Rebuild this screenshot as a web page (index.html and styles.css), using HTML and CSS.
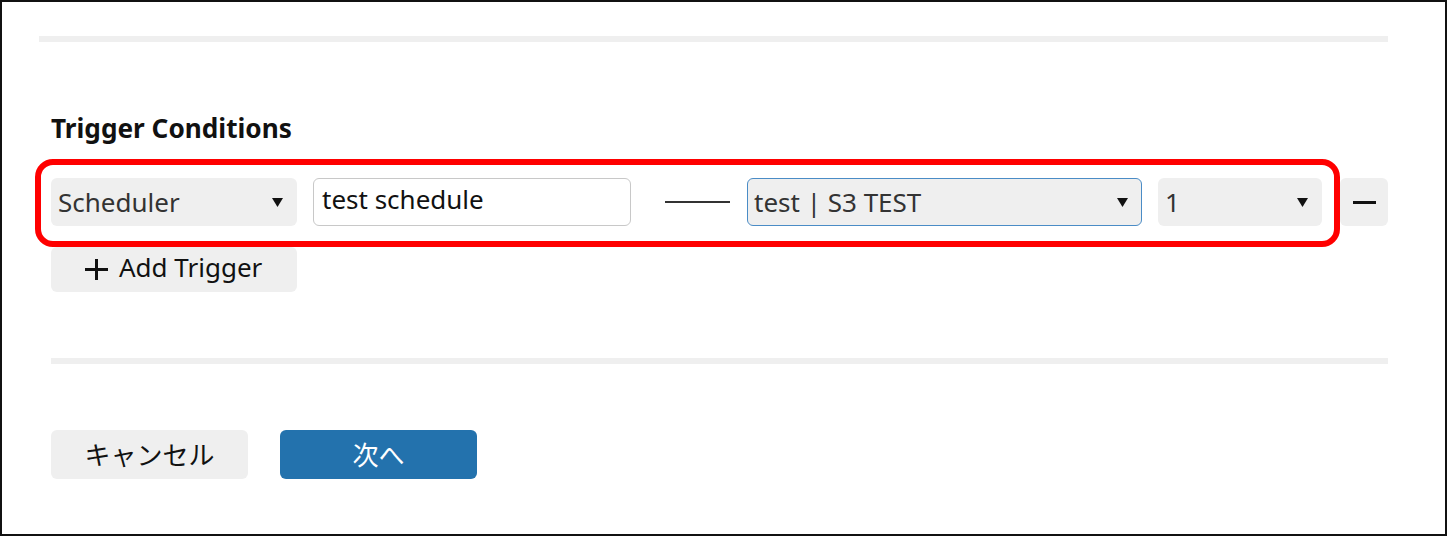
FILE: index.html
```html
<!DOCTYPE html>
<html lang="ja">
<head>
<meta charset="utf-8">
<title>Trigger Conditions</title>
<link rel="stylesheet" href="styles.css">
</head>
<body>
<div class="frame">
  <div class="top-rule"></div>
  <div class="content">
    <h2 class="heading">Trigger Conditions</h2>
    <div class="row">
      <div class="select select-type">
        <span class="select-text">Scheduler</span>
        <svg class="caret" width="11" height="9" viewBox="0 0 11 9"><path d="M0 0H11L5.5 9Z" fill="#111"/></svg>
      </div>
      <div class="input">test schedule</div>
      <div class="dash"></div>
      <div class="select select-target focused">
        <span class="select-text">test | S3 TEST</span>
        <svg class="caret" width="11" height="9" viewBox="0 0 11 9"><path d="M0 0H11L5.5 9Z" fill="#111"/></svg>
      </div>
      <div class="select select-count">
        <span class="select-text">1</span>
        <svg class="caret" width="11" height="9" viewBox="0 0 11 9"><path d="M0 0H11L5.5 9Z" fill="#111"/></svg>
      </div>
      <div class="btn-icon"><span class="minus"></span></div>
    </div>
    <div class="btn add-btn">
      <svg class="plus" width="23" height="21" viewBox="0 0 23 21"><path d="M0 10.5H23M11.5 0V21" stroke="#111" stroke-width="3"/></svg>
      <span>Add Trigger</span>
    </div>
    <div class="bottom-rule"></div>
    <div class="actions">
      <div class="btn cancel-btn">キャンセル</div>
      <div class="btn next-btn">次へ</div>
    </div>
  </div>
  <div class="highlight"></div>
</div>
</body>
</html>
```

FILE: styles.css
```css
html, body {
  margin: 0;
  padding: 0;
  background: #fff;
}
body {
  font-family: "Noto Sans", "Noto Sans CJK JP", sans-serif;
  color: #111;
}
.frame {
  position: relative;
  width: 1447px;
  height: 536px;
  box-sizing: border-box;
  border: 2px solid #111;
  overflow: hidden;
}
.top-rule {
  margin: 34px 0 0 37px;
  width: 1349px;
  height: 6px;
  background: #efefef;
}
.content {
  padding-left: 49px;
  width: 1337px;
}
.heading {
  margin: 70px 0 0;
  font-size: 26.2px;
  line-height: 32px;
  font-weight: 700;
  color: #111;
}
.row {
  display: flex;
  align-items: center;
  margin-top: 34px;
  height: 48px;
}
.select {
  box-sizing: border-box;
  height: 48px;
  background: #efefef;
  border-radius: 6px;
  display: flex;
  align-items: center;
  justify-content: space-between;
  padding: 0 14px 0 7px;
  font-size: 26px;
  color: #333;
}
.select-text {
  line-height: 48px;
  white-space: pre;
}
.caret {
  display: block;
  flex: none;
}
.select-type { width: 246px; }
.input {
  box-sizing: border-box;
  width: 318px;
  height: 48px;
  margin-left: 16px;
  border: 1px solid #c8c8c8;
  border-radius: 6px;
  background: #fff;
  padding: 0 8px;
  font-size: 26px;
  line-height: 40px;
  color: #111;
}
.dash {
  width: 65px;
  height: 2px;
  margin-left: 34px;
  background: #333;
}
.select-target {
  width: 395px;
  margin-left: 17px;
  padding-left: 7px;
}
.focused {
  border: 1px solid #4a8cc6;
  padding-left: 6px;
  padding-right: 13px;
}
.select-count {
  width: 164px;
  margin-left: 16px;
}
.btn-icon {
  width: 48px;
  height: 48px;
  margin-left: 18px;
  background: #efefef;
  border-radius: 6px;
  display: flex;
  align-items: center;
  justify-content: center;
}
.minus {
  display: block;
  width: 23px;
  height: 3px;
  background: #111;
}
.btn {
  box-sizing: border-box;
  border-radius: 6px;
  background: #efefef;
  font-size: 26px;
  display: flex;
  align-items: center;
  justify-content: center;
}
.add-btn {
  width: 246px;
  height: 45px;
  margin-top: 21px;
  justify-content: flex-start;
  padding-left: 34px;
  padding-bottom: 5px;
  gap: 11px;
  color: #111;
}
.plus { display: block; flex: none; margin-top: 4px; }
.bottom-rule {
  margin-top: 66px;
  width: 1337px;
  height: 6px;
  background: #efefef;
}
.actions {
  display: flex;
  gap: 32px;
  margin-top: 66px;
}
.cancel-btn {
  width: 197px;
  height: 49px;
  color: #111;
  padding-bottom: 2px;
}
.next-btn {
  width: 197px;
  height: 49px;
  background: #2372ad;
  color: #fff;
  padding-bottom: 2px;
}
.highlight {
  position: absolute;
  left: 33px;
  top: 157px;
  width: 1305px;
  height: 88px;
  box-sizing: border-box;
  border: 6px solid #ff0000;
  border-radius: 18px;
  pointer-events: none;
}
```
